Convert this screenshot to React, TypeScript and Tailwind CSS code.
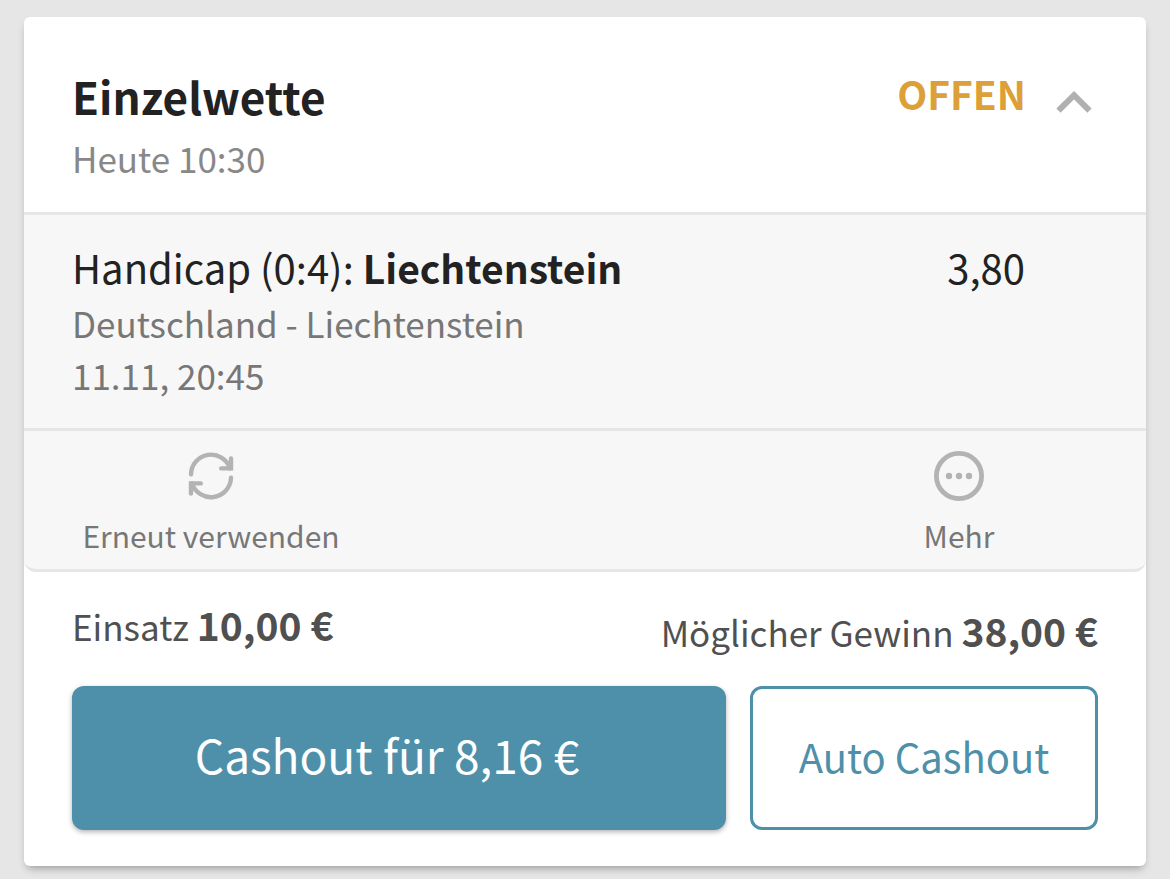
import { useState } from 'react'
import type { ReactNode } from 'react'

const bet = {
  type: 'Einzelwette',
  placedAt: 'Heute 10:30',
  status: 'OFFEN',
  market: 'Handicap (0:4):',
  pick: 'Liechtenstein',
  match: 'Deutschland - Liechtenstein',
  kickoff: '11.11, 20:45',
  odds: '3,80',
  stake: '10,00 €',
  win: '38,00 €',
  cashout: '8,16 €',
}

function ReuseIcon() {
  return (
    <svg width="50" height="50" viewBox="0 0 50 50" fill="none" stroke="currentColor" strokeWidth="4.4" strokeLinecap="round" aria-hidden="true">
      <path d="M5 23.4A20 20 0 0 1 44 17.4" />
      <path d="M45 7.4V17.4H35.2" />
      <path d="M45 26.8A20 20 0 0 1 6 32.4" />
      <path d="M5 42.6V32.4H14.8" />
    </svg>
  )
}

function MoreIcon() {
  return (
    <svg width="50" height="50" viewBox="0 0 50 50" aria-hidden="true">
      <circle cx="25" cy="25" r="22.6" fill="none" stroke="currentColor" strokeWidth="4.8" />
      <g fill="currentColor">
        <circle cx="15" cy="25" r="3.2" />
        <circle cx="25" cy="25" r="3.2" />
        <circle cx="35" cy="25" r="3.2" />
      </g>
    </svg>
  )
}

function Action({ icon, label, className }: { icon: ReactNode; label: string; className?: string }) {
  return (
    <button type="button" className={`flex flex-col items-center gap-3.5 pt-5 pb-3.5 text-[#b3b3b3] ${className ?? ''}`}>
      {icon}
      <span className="text-[30px] leading-10 text-[#777777]">{label}</span>
    </button>
  )
}

export default function App() {
  const [open, setOpen] = useState(true)

  return (
    <div className="min-h-screen bg-[#e6e6e6] px-6 pt-[17px] pb-3 font-['Noto_Sans_CJK_SC',sans-serif]">
      <article className="rounded-md bg-white shadow-[0_5px_8px_-3px_rgba(0,0,0,0.35)]">
        <header className="flex items-start justify-between border-b-3 border-[#e6e6e6] px-12 pt-12 pb-7">
          <div>
            <h1 className="text-[44px] leading-[63px] font-bold text-[#222222]">{bet.type}</h1>
            <p className="mt-1 text-[35px] leading-[52px] text-[#888888]">{bet.placedAt}</p>
          </div>
          <div className="flex items-start gap-6">
            <span className="text-[39px] leading-[56px] font-bold text-[#dd9f38]">{bet.status}</span>
            <button type="button" aria-label="Details" aria-expanded={open} onClick={() => setOpen(!open)} className="pt-3 text-[#b0b0b0]">
              <svg width="48" height="48" viewBox="0 0 48 48" fill="none" stroke="currentColor" strokeWidth="6" aria-hidden="true">
                <path d={open ? 'M8.5 33.7L24 18.2L39.5 33.7' : 'M8.5 18.2L24 33.7L39.5 18.2'} />
              </svg>
            </button>
          </div>
        </header>

        {open && (
          <div className="overflow-hidden rounded-b-xl border-b-3 border-[#e6e6e6] bg-[#f7f7f7]">
            <section className="flex justify-between border-b-3 border-[#e6e6e6] pt-[22px] pr-[121px] pb-[27px] pl-12">
              <div className="text-[35px] leading-[52px] text-[#777777]">
                <h2 className="text-[40px] leading-[60px] text-[#222222]">
                  {bet.market} <b className="text-[39px]">{bet.pick}</b>
                </h2>
                <p>{bet.match}</p>
                <p>{bet.kickoff}</p>
              </div>
              <span className="text-[40px] leading-[60px] text-[#222222]">{bet.odds}</span>
            </section>
            <div className="grid grid-cols-3">
              <Action icon={<ReuseIcon />} label="Erneut verwenden" />
              <Action icon={<MoreIcon />} label="Mehr" className="col-start-3" />
            </div>
          </div>
        )}

        <footer className="px-12 pt-[22px] pb-9">
          <div className="flex items-start justify-between text-[35px] text-[#505050]">
            <p className="leading-[60px]">
              Einsatz <b className="text-[39px]">{bet.stake}</b>
            </p>
            <p className="leading-[72px]">
              Möglicher Gewinn <b className="text-[39px]">{bet.win}</b>
            </p>
          </div>
          <div className="mt-[18px] flex gap-6">
            <button
              type="button"
              className="h-36 flex-1 rounded-xl bg-[#4e90a9] pr-6 pb-2 text-[46px] text-white shadow-[0_2px_5px_rgba(0,0,0,0.3)]"
            >
              Cashout für {bet.cashout}
            </button>
            <button type="button" className="h-36 w-[348px] rounded-xl border-3 border-[#4e90a9] pb-1 text-[40px] text-[#4e90a9]">
              Auto Cashout
            </button>
          </div>
        </footer>
      </article>
    </div>
  )
}
